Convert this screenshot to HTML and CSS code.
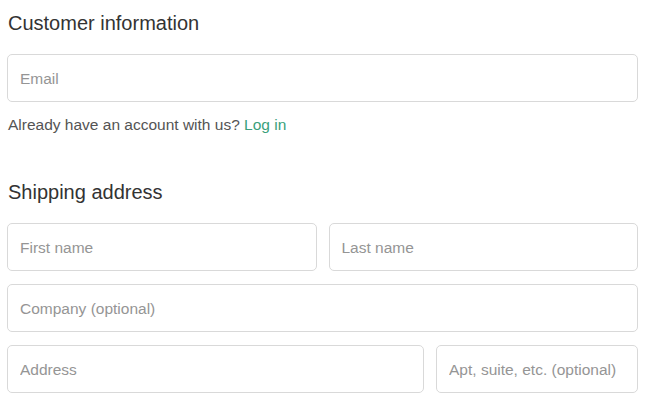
FILE: index.html
```html
<!DOCTYPE html>
<html>
<head>
<meta charset="utf-8">
<link rel="stylesheet" href="styles.css">
</head>
<body>
<main class="checkout">
  <section class="section">
    <h2 class="section-title">Customer information</h2>
    <div class="fields">
      <input class="field" type="email" placeholder="Email">
    </div>
    <p class="account-note">Already have an account with us? <a class="link" href="#">Log in</a></p>
  </section>
  <section class="section shipping">
    <h2 class="section-title">Shipping address</h2>
    <div class="fields">
      <div class="row row-half">
        <input class="field" type="text" placeholder="First name">
        <input class="field" type="text" placeholder="Last name">
      </div>
      <input class="field" type="text" placeholder="Company (optional)">
      <div class="row row-address">
        <input class="field" type="text" placeholder="Address">
        <input class="field" type="text" placeholder="Apt, suite, etc. (optional)">
      </div>
    </div>
  </section>
</main>
</body>
</html>
```

FILE: styles.css
```css
* { box-sizing: border-box; }
html, body { margin: 0; padding: 0; background: #fff; }
body {
  font-family: "Liberation Sans", Arial, Helvetica, sans-serif;
  color: #333;
}
.checkout {
  width: 631px;
  margin-left: 7px;
  padding-top: 11px;
}
.section-title {
  margin: 0 0 19px 1px;
  font-size: 20px;
  line-height: 24px;
  font-weight: normal;
  color: #333;
}
.shipping { margin-top: 45px; }
.fields {
  display: flex;
  flex-direction: column;
  gap: 13px;
}
.row {
  display: grid;
  gap: 12px;
}
.row-half { grid-template-columns: 1fr 1fr; }
.row-address { grid-template-columns: 417fr 202fr; }
.field {
  display: block;
  width: 100%;
  height: 48px;
  margin: 0;
  padding: 1px 12px 0;
  border: 1px solid #d9d9d9;
  border-radius: 5px;
  background: #fff;
  font-family: inherit;
  font-size: 15.5px;
  color: #333;
  outline: none;
}
.field::placeholder { color: #959595; opacity: 1; }
.account-note {
  margin: 13px 0 0 1px;
  font-size: 15.5px;
  line-height: 20px;
  color: #545454;
}
.link { color: #3a9f7b; text-decoration: none; }
```
